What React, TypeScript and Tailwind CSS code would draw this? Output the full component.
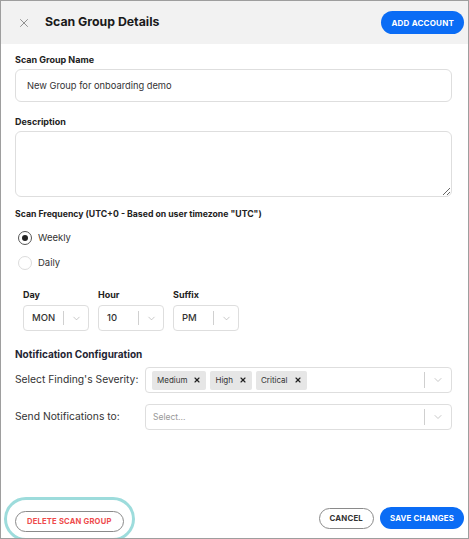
import { X, ChevronDown } from "lucide-react";

const font = { fontFamily: "Inter, 'Noto Sans', sans-serif" };

function SmallSelect({ value }: { value: string }) {
  return (
    <div className="flex h-[26px] w-[66px] items-center rounded-[4px] border border-[#dedede] bg-white">
      <span className="flex-1 pl-[8px] text-[9.5px] font-medium text-[#333]">{value}</span>
      <span className="h-[14px] w-px bg-[#d0d0d0]" />
      <span className="flex w-[24px] justify-center">
        <ChevronDown className="h-[11px] w-[11px] text-[#b0b0b0]" strokeWidth={1.5} />
      </span>
    </div>
  );
}

function Tag({ label }: { label: string }) {
  return (
    <span className="flex h-[19px] items-center gap-[6px] rounded-[2px] bg-[#e6e6e6] px-[5px] text-[8px] text-[#333]">
      {label}
      <X className="h-[8px] w-[8px] text-[#222]" strokeWidth={3.5} />
    </span>
  );
}

function SelectTail() {
  return (
    <div className="flex items-center">
      <span className="h-[16px] w-px bg-[#cfcfcf]" />
      <span className="flex w-[26px] justify-center">
        <ChevronDown className="h-[12px] w-[12px] text-[#b5b5b5]" strokeWidth={1.5} />
      </span>
    </div>
  );
}

export default function App() {
  return (
    <div
      className="flex h-[539px] w-[469px] flex-col overflow-hidden border border-[#9e9e9e] bg-white"
      style={font}
    >
      <div className="flex h-[43px] shrink-0 items-center bg-[#f2f2f2] pl-[16px] pr-[4px]">
        <X className="h-[14px] w-[14px] text-[#8a8a8a]" strokeWidth={1.6} />
        <h1 className="ml-[14px] text-[12.3px] font-bold text-[#1a1a1a]">Scan Group Details</h1>
        <button className="ml-auto h-[23px] rounded-full bg-[#0a6cf5] px-[10px] text-[8px] font-bold tracking-[0.2px] text-white">
          ADD ACCOUNT
        </button>
      </div>

      <div className="flex flex-1 flex-col pl-[14px] pr-[16px] pt-[10px]">
        <label className="text-[9px] font-bold leading-[12px] text-[#222]">Scan Group Name</label>
        <div className="mt-[3px] flex h-[33px] w-[437px] items-center rounded-[6px] border border-[#dedede] px-[11px] text-[9.3px] text-[#333]">
          New Group for onboarding demo
        </div>

        <label className="mt-[14px] text-[9px] font-bold leading-[12px] text-[#222]">Description</label>
        <textarea className="mt-[3px] block h-[66px] w-[437px] resize-y rounded-[6px] border border-[#dedede] outline-none" />

        <label className="mt-[11px] text-[8.7px] font-bold leading-[12px] text-[#222]">
          Scan Frequency (UTC+0 - Based on user timezone "UTC")
        </label>

        <div className="mt-[11px] flex h-[14px] items-center gap-[6px] pl-[3px]">
          <span className="flex h-[14px] w-[14px] items-center justify-center rounded-full border-[1.5px] border-[#555]">
            <span className="h-[6px] w-[6px] rounded-full bg-[#222]" />
          </span>
          <span className="text-[9.5px] text-[#333]">Weekly</span>
        </div>
        <div className="mt-[11px] flex h-[14px] items-center gap-[6px] pl-[3px]">
          <span className="h-[14px] w-[14px] rounded-full border border-[#dcdcdc]" />
          <span className="text-[9.5px] text-[#333]">Daily</span>
        </div>

        <div className="mt-[19px] flex gap-[9px] pl-[8px]">
          {[
            ["Day", "MON"],
            ["Hour", "10"],
            ["Suffix", "PM"],
          ].map(([l, v]) => (
            <div key={l} className="flex flex-col">
              <span className="text-[9px] font-bold leading-[12px] text-[#222]">{l}</span>
              <div className="mt-[4px]">
                <SmallSelect value={v} />
              </div>
            </div>
          ))}
        </div>

        <h2 className="mt-[17px] text-[10px] font-bold leading-[12px] text-[#1f2533]">Notification Configuration</h2>

        <div className="mt-[7px] flex items-center">
          <span className="w-[130px] text-[10.3px] text-[#333]">Select Finding's Severity:</span>
          <div className="flex h-[26px] flex-1 items-center rounded-[4px] border border-[#dedede] pl-[6px]">
            <div className="flex flex-1 gap-[4px]">
              <Tag label="Medium" />
              <Tag label="High" />
              <Tag label="Critical" />
            </div>
            <SelectTail />
          </div>
        </div>

        <div className="mt-[11px] flex items-center">
          <span className="w-[130px] text-[10.3px] text-[#333]">Send Notifications to:</span>
          <div className="flex h-[26px] flex-1 items-center rounded-[4px] border border-[#dedede] pl-[7px]">
            <span className="flex-1 text-[8.5px] text-[#999]">Select...</span>
            <SelectTail />
          </div>
        </div>
      </div>

      <div className="mb-[-3px] flex shrink-0 items-center pl-[3px] pr-[4px]">
        <div className="rounded-full border-[3px] border-[#9ddcdc] px-[8px] py-[6px]">
          <button className="h-[21px] rounded-full border border-[#8a8a8a] px-[11px] text-[7.6px] font-bold tracking-[0.2px] text-[#ee4b4b]">
            DELETE SCAN GROUP
          </button>
        </div>
        <button className="mb-[1px] ml-auto h-[21px] rounded-full border border-[#8a8a8a] px-[10px] text-[7.8px] font-bold tracking-[0.2px] text-[#333]">
          CANCEL
        </button>
        <button className="mb-[1px] ml-[6px] h-[22px] rounded-full bg-[#0a6cf5] px-[10px] text-[7.8px] font-bold tracking-[0.2px] text-white">
          SAVE CHANGES
        </button>
      </div>
    </div>
  );
}
